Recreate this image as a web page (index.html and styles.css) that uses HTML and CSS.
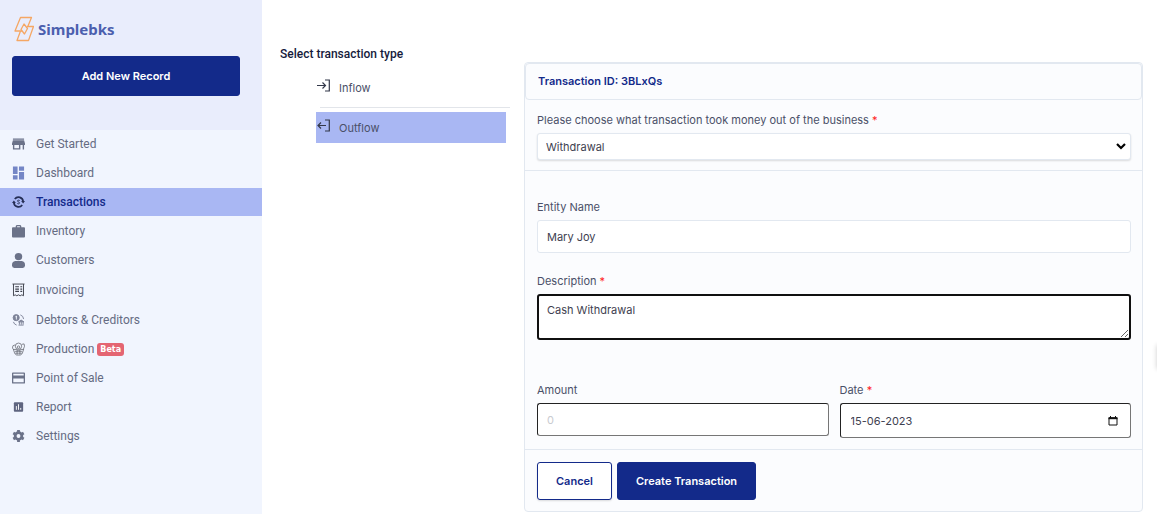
FILE: index.html
```html
<!DOCTYPE html>
<html lang="en">
<head>
<meta charset="utf-8">
<title>Simplebks - Transactions</title>
<link rel="stylesheet" href="styles.css">
</head>
<body>
<div class="app">
  <aside class="sidebar">
    <div class="sidebar-top">
      <a class="brand" href="#">
        <svg class="brand-mark" viewBox="0 0 20 26" fill="none" stroke="#f5a764" stroke-width="1.300" stroke-linejoin="round"><path d="M8 15H1L6.500 1.500H17.500L14 10"/><path d="M13 10.500H19.500L14.500 24.500H3L6.500 15"/><path d="M10 8L13.500 12.500L10.500 18L7 13.500Z"/></svg>
        <span class="brand-name">Simplebks</span>
      </a>
      <button class="btn btn-primary btn-block" type="button">Add New Record</button>
    </div>
    <nav class="menu">
      <a class="menu-item" href="#"><svg class="icon" viewBox="0 0 14 14" fill="#6b7289"><path d="M1 1h12v1.500H1zM1 3h12l1 3.500V8h-1v5h-1.500V8H9v5H1V8H0V6.500zM2.500 8v3.500h5V8z" fill-rule="evenodd"/></svg>Get Started</a>
      <a class="menu-item" href="#"><svg class="icon" viewBox="0 0 14 14" fill="#7486c6"><path d="M1 0h5v8H1zM7.500 0H13v4.500H7.500zM1 9.500h5V14H1zM7.500 6H13v8H7.500z"/></svg>Dashboard</a>
      <a class="menu-item active" href="#"><svg class="icon" viewBox="0 0 14 14" fill="none" stroke="#252e55"><path d="M2 7.500A5 5 0 0 0 11 10.200M12 6.500A5 5 0 0 0 3 3.800" stroke-width="1.900"/><path d="M0 8L2 5.500L4.200 8zM9.800 6L12 8.500L14 6z" fill="#252e55" stroke="none"/><path d="M8.300 5.500C7.500 4.600 5.700 5 5.900 6C6.200 7.200 8 6.700 8.100 8C8.100 9.200 6.400 9.300 5.700 8.500" stroke-width="1"/></svg>Transactions</a>
      <a class="menu-item" href="#"><svg class="icon" viewBox="0 0 14 14" fill="#6b7289"><path d="M4 3V1.500L5 .5h4l1 1V3h3q1 0 1 1v9q0 1-1 1H1q-1 0-1-1V4q0-1 1-1zM5.500 3h3V2h-3z" fill-rule="evenodd"/></svg>Inventory</a>
      <a class="menu-item" href="#"><svg class="icon icon-tall" viewBox="0 0 14 17" fill="#6b7289"><circle cx="7" cy="4.300" r="4"/><path d="M3.500 9h7Q14 9.500 14 13v1q0 2.500-2.500 2.500h-9Q0 16.500 0 14v-1Q0 9.500 3.500 9z"/></svg>Customers</a>
      <a class="menu-item roomy" href="#"><svg class="icon" viewBox="0 0 14 14" fill="none" stroke="#3c3f4a"><path d="M.5 .6h13M1.600 .6v12.600l1.800-1 1.800 1 1.800-1 1.800 1 1.800-1 1.800 1V.6"/><path d="M3.500 3.500h4M9 3.500h2M3.500 6h4M9 6h2M3.500 8.500h4M9 8.500h2" stroke-width="1.200"/></svg>Invoicing</a>
      <a class="menu-item" href="#"><svg class="icon" viewBox="0 0 14 14" fill="none" stroke="#7d8398"><circle cx="4.500" cy="4.500" r="3.300" fill="#7d8398"/><path d="M4.700 2.500v4M3.700 3.500h1.800" stroke="#f1f5fe"/><path d="M9 1.500A5 5 0 0 1 12.500 6M1.500 9A5 5 0 0 0 5 12.500"/><path d="M7 9L9.800 7L12.800 9zM7 12.500h5.500M8 9v3M10 9v3M12 9v3" fill="#7d8398"/></svg>Debtors &amp; Creditors</a>
      <a class="menu-item" href="#"><svg class="icon" viewBox="0 0 14 14" fill="none" stroke="#62656f" stroke-width=".8"><circle cx="7" cy="4" r="3.400"/><circle cx="7" cy="5" r="1.300"/><path d="M3.500 2.500L1 3.500L.5 6L2 8M10.500 2L13 1.500L13.500 4L12 8M1.500 7.500h3l2.500 1 2.500-1h3L11 12l-2 1.500H5L3 12zM3 9.500h8M3.500 11.500h7M5.500 8v5M8.500 8v5"/></svg>Production <span class="badge">Beta</span></a>
      <a class="menu-item" href="#"><svg class="icon" viewBox="0 0 14 14" fill="#6b7289"><path d="M1 1h12q1 0 1 1v10q0 1-1 1H1q-1 0-1-1V2q0-1 1-1zM1.400 2.400v2h11.200v-2zM1.400 7.500v4.100h11.200V7.500z" fill-rule="evenodd"/></svg>Point of Sale</a>
      <a class="menu-item" href="#"><svg class="icon" viewBox="0 0 14 14"><rect x="2" y="2" width="10" height="10" rx="1" fill="#5f6580"/><path d="M4.700 6v4M7 4v6M9.400 8v2" stroke="#fff"/></svg>Report</a>
      <a class="menu-item" href="#"><svg class="icon" viewBox="0 0 14 14" fill="none" stroke="#6b7289"><circle cx="7" cy="7" r="3.600" stroke-width="3"/><path d="M7 .5v3M7 10.500v3M1.400 3.800L4 5.300M10 8.700l2.600 1.500M1.400 10.200L4 8.700M10 5.300l2.600-1.500" stroke-width="3"/></svg>Settings</a>
    </nav>
  </aside>

  <main class="content">
    <section class="types">
      <h2 class="types-title">Select transaction type</h2>
      <div class="types-list">
        <a class="type" href="#"><svg class="type-icon" viewBox="0 0 14 14" fill="none" stroke="#33384a" stroke-width="1.200"><path d="M0 6.500h8.500M5.500 3.500l3 3-3 3M8 1h4.300v11H8"/></svg>Inflow</a>
        <hr class="types-rule">
        <a class="type selected" href="#"><svg class="type-icon" viewBox="0 0 14 14" fill="none" stroke="#33384a" stroke-width="1.200"><path d="M9 6.500H1M4 3.500l-3 3 3 3M8 1h4.300v11H8"/></svg>Outflow</a>
      </div>
    </section>

    <form class="card">
      <h1 class="card-header">Transaction ID: 3BLxQs</h1>
      <div class="card-section">
        <div class="field">
          <label for="kind">Please choose what transaction took money out of the business <span class="req">*</span></label>
          <div class="select-wrap">
            <select id="kind" class="control select"><option>Withdrawal</option></select>
            <svg class="chevron" viewBox="0 0 10 7" fill="none" stroke="#000" stroke-width="2.200"><path d="M1 1l4 4 4-4"/></svg>
          </div>
        </div>
      </div>
      <div class="card-section details">
        <div class="field">
          <label for="entity">Entity Name</label>
          <input id="entity" class="control" type="text" value="Mary Joy">
        </div>
        <div class="field">
          <label for="description">Description <span class="req">*</span></label>
          <textarea id="description" class="control textarea">Cash Withdrawal</textarea>
        </div>
        <div class="field-row">
          <div class="field">
            <label for="amount">Amount</label>
            <input id="amount" class="control inset" type="text" inputmode="decimal" placeholder="0">
          </div>
          <div class="field">
            <label for="date">Date <span class="req">*</span></label>
            <div class="control inset date">
              <input id="date" class="date-input" type="text" value="15-06-2023">
              <button class="date-button" type="button" aria-label="Open calendar"><svg class="date-icon" viewBox="0 0 10 10" fill="none" stroke="#111"><path d="M1 2h8v7H1z"/><path d="M.5 2.200h9" stroke-width="2"/><path d="M2.500 0v2M7.500 0v2"/></svg></button>
            </div>
          </div>
        </div>
      </div>
      <div class="card-footer">
        <button class="btn btn-outline" type="button">Cancel</button>
        <button class="btn btn-primary" type="submit">Create Transaction</button>
      </div>
    </form>
  </main>
</div>
<div class="edge-tab"></div>
</body>
</html>
```

FILE: styles.css
```css
* {
  box-sizing: border-box;
}

body {
  margin: 0;
  background: #fff;
  color: #4a5068;
  font: 11px/16px Inter, "Liberation Sans", sans-serif;
}

a {
  color: inherit;
  text-decoration: none;
}

.app {
  display: flex;
  min-height: 100vh;
}

.sidebar {
  flex: 0 0 262px;
  background: #f1f5fe;
}

.sidebar-top {
  height: 130px;
  padding: 16px 22px 0 12px;
  background: #e9edfc;
}

.brand {
  display: flex;
  align-items: center;
  gap: 4px;
  height: 25px;
  margin-bottom: 15px;
  padding-left: 2px;
}

.brand-mark {
  width: 20px;
  height: 26px;
}

.brand-name {
  color: #4c5fae;
  font: bold 15px/24px "Noto Sans", sans-serif;
}

.btn {
  border: 1px solid #132a8a;
  border-radius: 3px;
  font: 600 11px/16px Inter, sans-serif;
}

.btn-primary {
  padding: 10px 18px;
  background: #132a8a;
  color: #fff;
}

.btn-block {
  width: 100%;
  height: 40px;
}

.btn-outline {
  padding: 10px 18px;
  background: #fff;
  color: #132a8a;
  box-shadow: 0 1px 2px #0002;
}

.menu {
  display: flex;
  flex-direction: column;
  gap: 1px;
}

.menu-item {
  display: flex;
  align-items: center;
  height: 28px;
  padding-left: 12px;
  color: #656b82;
  font: 12px/16px Roboto, sans-serif;
}

.menu-item.roomy {
  height: 30px;
}

.menu-item.active {
  background: #a9b7f3;
  color: #132a8a;
  font-weight: 500;
}

.icon {
  width: 13px;
  height: 14px;
  margin-right: 11px;
}

.icon-tall {
  height: 17px;
}

.badge {
  margin-left: 3px;
  padding: 0 3px;
  border-radius: 3px;
  background: #e46572;
  color: #fff;
  font: bold 8px/13px "DejaVu Sans", sans-serif;
}

.content {
  display: flex;
  flex: 1;
  align-items: flex-start;
  min-width: 0;
  padding: 46px 14px 2px 18px;
}

.types {
  flex: 0 0 244px;
}

.types-title {
  margin: 0 0 10px;
  color: #161b3c;
  font: 500 12px/16px Roboto, sans-serif;
}

.types-list {
  width: 190px;
  margin-left: 36px;
}

.type {
  display: flex;
  align-items: flex-start;
  gap: 8px;
  height: 31px;
  padding: 8px 0 0 1px;
}

.type-icon {
  width: 14px;
  height: 14px;
  margin-top: -1px;
}

.types-rule {
  height: 1px;
  margin: 4px -4px 4px 4px;
  border: 0;
  background: #e2e5ea;
}

.type.selected {
  background: #a9b7f3;
}

.card {
  flex: 1;
  min-width: 0;
  margin-top: 16px;
  border: 1px solid #e2e8f0;
  border-radius: 4px;
  background: #fbfcfe;
}

.card-header {
  margin: 0;
  padding: 9px 12px 10px;
  border: 1px solid #e2e8f0;
  border-radius: 4px;
  color: #132a8a;
  font: 600 11px/16px Inter, sans-serif;
}

.card-section {
  padding: 12px 11px 10px 12px;
  border-bottom: 1px solid #e2e8f0;
}

.details {
  display: flex;
  flex-direction: column;
  gap: 20px;
  padding-top: 28px;
  padding-bottom: 11px;
}

.field {
  display: flex;
  flex-direction: column;
  align-items: stretch;
  gap: 5px;
  min-width: 0;
}

.field-row {
  display: grid;
  grid-template-columns: 1fr 1fr;
  gap: 11px;
  margin-top: 22px;
}

.req {
  color: #f22;
}

.control {
  width: 100%;
  height: 33px;
  padding: 0 9px;
  border: 1px solid #e2e8f0;
  border-radius: 3px;
  background: #fff;
  color: #3e4150;
  font: 11px/16px Inter, sans-serif;
}

.select-wrap {
  display: grid;
  align-items: center;
}

.select {
  grid-area: 1 / 1;
  height: 27px;
  padding-left: 8px;
  appearance: none;
  box-shadow: 0 1px 2px #0002;
}

.chevron {
  grid-area: 1 / 1;
  justify-self: end;
  width: 10px;
  height: 7px;
  margin-right: 5px;
  pointer-events: none;
}

.textarea {
  display: block;
  height: 46px;
  padding: 6px 8px;
  border: 2px solid #101010;
  outline: 0;
  resize: vertical;
}

.inset {
  border-color: #222 #767676 #767676 #222;
}

.control::placeholder {
  color: #c9cbd0;
}

.date {
  display: flex;
  align-items: center;
  height: 35px;
  padding: 0 12px 0 10px;
}

.date-input {
  flex: 1;
  min-width: 0;
  padding: 0;
  border: 0;
  outline: 0;
  background: none;
  color: inherit;
  font: inherit;
}

.date-button {
  display: flex;
  padding: 0;
  border: 0;
  background: none;
}

.date-icon {
  width: 10px;
  height: 10px;
}

.card-footer {
  display: flex;
  gap: 5px;
  padding: 12px 12px 11px;
}

/* Collapsed side tab: only its shadow shows at the window edge. */
.edge-tab {
  position: fixed;
  top: 345px;
  left: 100%;
  width: 20px;
  height: 24px;
  box-shadow: 0 0 5px #0003;
}
```
